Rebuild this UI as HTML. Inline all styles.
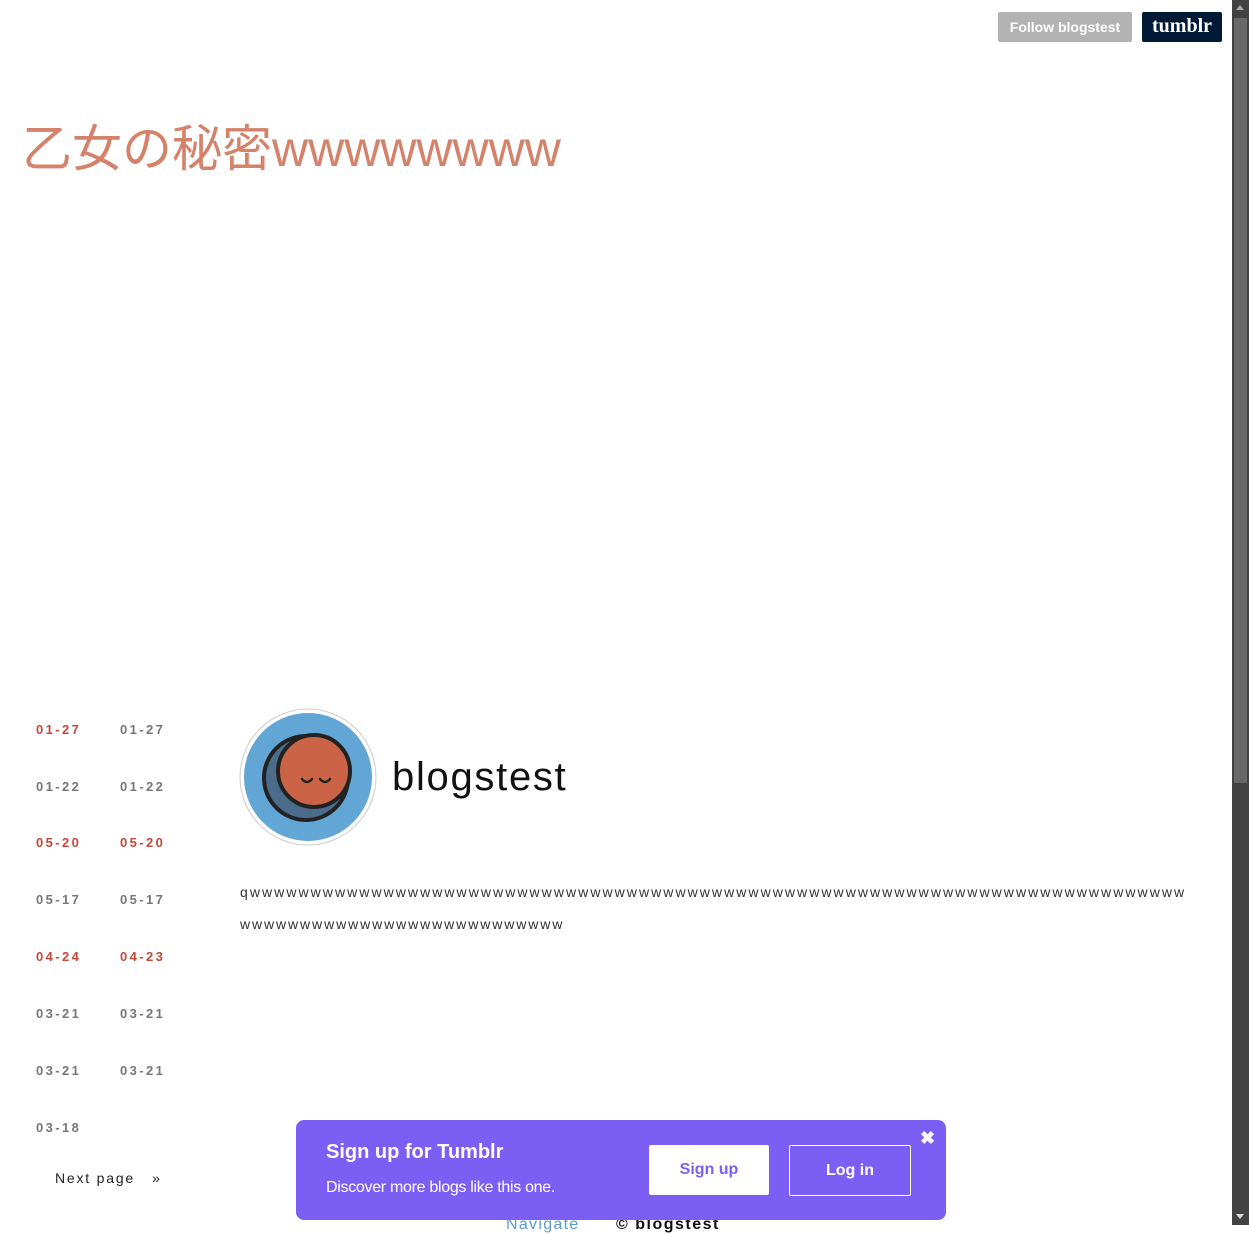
<!DOCTYPE html>
<html><head><meta charset="utf-8"><style>
*{margin:0;padding:0;box-sizing:border-box}
body{width:1249px;height:1225px;overflow:hidden;background:#fff;font-family:"Liberation Sans",Arial,sans-serif;position:relative}
.abs{position:absolute}
.sb{left:1232px;top:0;width:17px;height:1225px;background:#424242}
.thumb{left:1234px;top:18px;width:13px;height:765px;background:#686868}
.follow{left:998px;top:12px;width:134px;height:30px;background:#b3b3b3;color:#fff;font-weight:bold;font-size:14px;line-height:30px;text-align:center;border-radius:2px}
.tlogo{left:1142px;top:12px;width:80px;height:30px;background:#001935;color:#fff;font-family:"Liberation Serif",serif;font-weight:bold;font-size:20px;line-height:29px;text-align:center;border-radius:2px}
.title{left:22px;top:119px;font-size:50px;color:#d4826a;font-family:"Liberation Sans","Noto Sans CJK JP",sans-serif;white-space:nowrap;line-height:60px}
.d{font-size:13px;font-weight:bold;letter-spacing:2.4px;color:#777}
.r{color:#c5483a}
.name{left:392px;top:755px;font-size:40px;letter-spacing:1.7px;color:#111}
.txt{font-size:14px;letter-spacing:1.9px;color:#333;white-space:nowrap}
.pop{left:296px;top:1120px;width:650px;height:100px;background:#7b5ff5;border-radius:8px;color:#fff}
</style></head><body>
<div class="abs follow">Follow blogstest</div>
<div class="abs tlogo">tumblr</div>
<div class="abs title">乙女の秘密wwwwwwww</div>

<div class="abs d r" style="left:36px;top:722px">01-27</div><div class="abs d" style="left:120px;top:722px">01-27</div>
<div class="abs d" style="left:36px;top:779px">01-22</div><div class="abs d" style="left:120px;top:779px">01-22</div>
<div class="abs d r" style="left:36px;top:835px">05-20</div><div class="abs d r" style="left:120px;top:835px">05-20</div>
<div class="abs d" style="left:36px;top:892px">05-17</div><div class="abs d" style="left:120px;top:892px">05-17</div>
<div class="abs d r" style="left:36px;top:949px">04-24</div><div class="abs d r" style="left:120px;top:949px">04-23</div>
<div class="abs d" style="left:36px;top:1006px">03-21</div><div class="abs d" style="left:120px;top:1006px">03-21</div>
<div class="abs d" style="left:36px;top:1063px">03-21</div><div class="abs d" style="left:120px;top:1063px">03-21</div>
<div class="abs d" style="left:36px;top:1120px">03-18</div>
<div class="abs" style="left:55px;top:1170px;font-size:14px;letter-spacing:1.8px;color:#222">Next page &nbsp;&nbsp;»</div>

<svg class="abs" style="left:239px;top:708px" width="140" height="140" viewBox="0 0 140 140">
<circle cx="69" cy="69" r="68" fill="#fff" stroke="#ccc" stroke-width="1"/>
<circle cx="69" cy="69" r="64" fill="#62a6d5"/>
<circle cx="67" cy="70" r="42" fill="#4c6c8c" stroke="#222" stroke-width="4"/>
<circle cx="75" cy="63" r="36" fill="#cb6446" stroke="#222" stroke-width="4"/>
<path d="M63 71 q5 6 10 0 M81 71 q5 6 10 0" fill="none" stroke="#222" stroke-width="2.5" stroke-linecap="round"/>
</svg>
<div class="abs name">blogstest</div>
<div class="abs txt" style="left:240px;top:884px;letter-spacing:2.05px">qwwwwwwwwwwwwwwwwwwwwwwwwwwwwwwwwwwwwwwwwwwwwwwwwwwwwwwwwwwwwwwwwwwwwwwwwwwwww</div>
<div class="abs txt" style="left:240px;top:916px">wwwwwwwwwwwwwwwwwwwwwwwwwww</div>

<div class="abs" style="left:506px;top:1216px;font-size:16px;color:#5a9bd5;letter-spacing:1.3px">Navigate</div>
<div class="abs" style="left:616px;top:1216px;font-size:16px;color:#111;font-weight:bold;letter-spacing:1.5px">© blogstest</div>

<div class="abs pop">
<div class="abs" style="left:30px;top:21px;font-size:20px;font-weight:bold">Sign up for Tumblr</div>
<div class="abs" style="left:30px;top:59px;font-size:16px;letter-spacing:-0.3px">Discover more blogs like this one.</div>
<div class="abs" style="left:353px;top:25px;width:120px;height:50px;background:#fff;border-radius:2px;color:#7b5ff5;font-weight:bold;font-size:16px;line-height:50px;text-align:center">Sign up</div>
<div class="abs" style="left:493px;top:25px;width:122px;height:51px;border:1px solid #fff;border-radius:2px;font-weight:bold;font-size:16px;line-height:49px;text-align:center">Log in</div>
<div class="abs" style="left:624px;top:8px;font-size:18px;font-weight:bold">✖</div>
</div>

<div class="abs sb"></div>
<div class="abs thumb"></div>
<div class="abs" style="left:1236px;top:5px;width:0;height:0;border-left:4px solid transparent;border-right:4px solid transparent;border-bottom:5px solid #aaa"></div>
<div class="abs" style="left:1236px;top:1214px;width:0;height:0;border-left:4px solid transparent;border-right:4px solid transparent;border-top:5px solid #ddd"></div>
</body></html>
